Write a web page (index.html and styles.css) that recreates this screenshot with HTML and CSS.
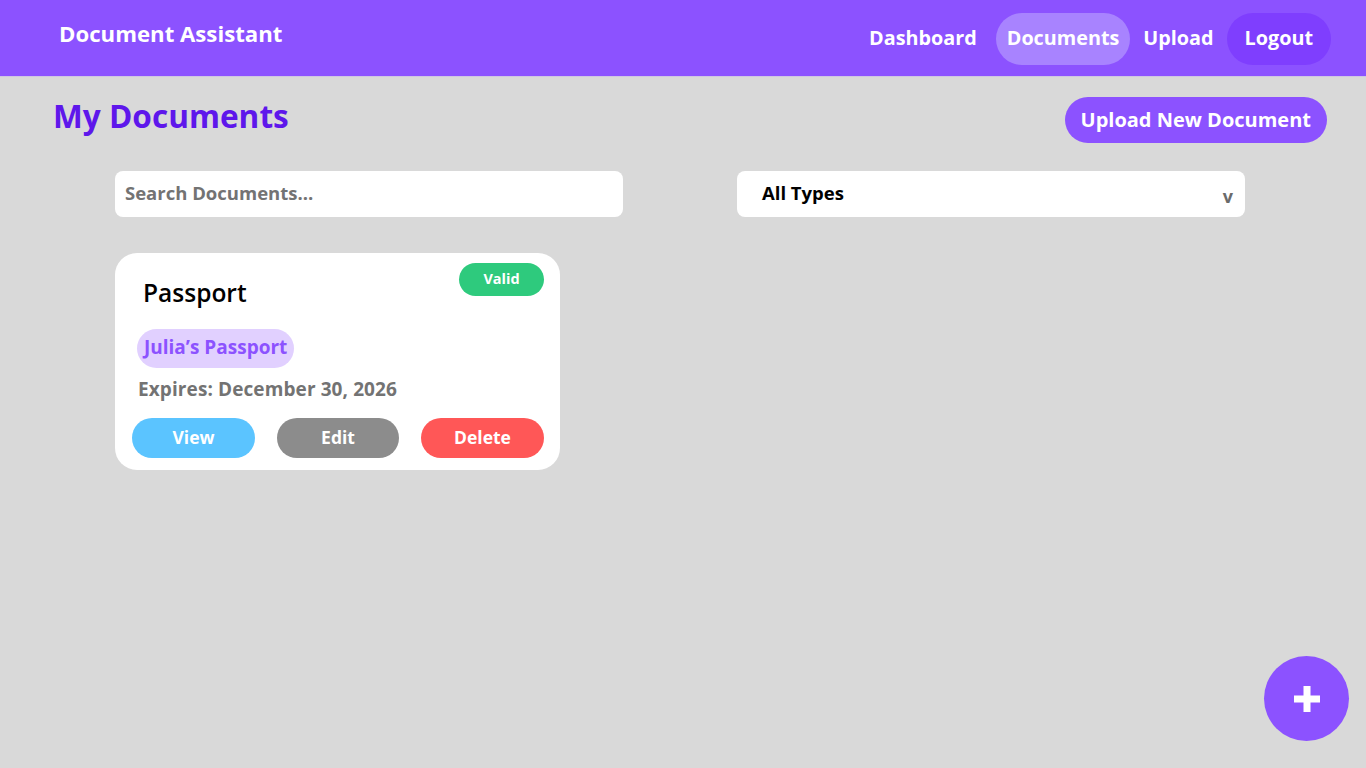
FILE: index.html
```html
<!DOCTYPE html>
<html lang="en">
<head>
<meta charset="utf-8">
<title>Document Assistant</title>
<link rel="stylesheet" href="styles.css">
</head>
<body>
<header class="topbar">
  <div class="brand">Document Assistant</div>
  <nav class="nav">
    <a class="nav-link">Dashboard</a>
    <a class="nav-link active">Documents</a>
    <a class="nav-link">Upload</a>
    <a class="nav-link logout">Logout</a>
  </nav>
</header>
<main class="main">
  <div class="page-head">
    <h1 class="page-title">My Documents</h1>
    <button class="upload-btn">Upload New Document</button>
  </div>
  <div class="filters">
    <div class="search">Search Documents...</div>
    <div class="select"><span>All Types</span><span class="caret">v</span></div>
  </div>
  <div class="cards">
    <article class="card">
      <div class="card-top">
        <h2 class="card-title">Passport</h2>
        <span class="badge">Valid</span>
      </div>
      <span class="chip">Julia’s Passport</span>
      <p class="expires">Expires: December 30, 2026</p>
      <div class="actions">
        <button class="btn view">View</button>
        <button class="btn edit">Edit</button>
        <button class="btn delete">Delete</button>
      </div>
    </article>
  </div>
</main>
<button class="fab" aria-label="Add">
  <svg width="26" height="26" viewBox="0 0 26 26"><rect x="9.5" y="0" width="7" height="26" fill="#fff"/><rect x="0" y="9.5" width="26" height="7" fill="#fff"/></svg>
</button>
</body>
</html>
```
FILE: styles.css
```css
* { box-sizing: border-box; }
html, body { margin: 0; padding: 0; }
body {
  background: #d9d9d9;
  font-family: "Open Sans", "Noto Sans", sans-serif;
  width: 1366px;
  height: 768px;
  overflow: hidden;
  position: relative;
}
.topbar {
  height: 77px;
  background: #8c52ff;
  border-bottom: 1px solid #cfc6e3;
  display: flex;
  align-items: flex-start;
  justify-content: space-between;
  padding: 0 35px 0 59px;
}
.brand {
  color: #fff;
  font-weight: 700;
  font-size: 22.2px;
  line-height: 26px;
  margin-top: 21px;
  letter-spacing: 0;
}
.nav {
  display: flex;
  align-items: center;
  margin-top: 13px;
}
.nav-link {
  color: #fff;
  font-weight: 700;
  font-size: 19.8px;
  height: 52px;
  line-height: 50px;
  padding: 0 11px;
  border-radius: 26px;
  letter-spacing: 0;
}
.nav-link:first-child { margin-right: 8px; }
.nav-link.active { background: #a883ff; margin-right: 2px; }
.nav-link.logout { background: #7f3efe; padding: 0 18px; margin-left: 2px; }
.main { padding: 0 39px 0 53px; }
.page-head {
  display: flex;
  justify-content: space-between;
  align-items: flex-start;
  padding-top: 20px;
}
.page-title {
  margin: 0;
  color: #5e17eb;
  font-size: 31.6px;
  font-weight: 700;
  line-height: 38px;
  letter-spacing: 0;
}
.upload-btn {
  background: #8c52ff;
  color: #fff;
  border: none;
  font-family: inherit;
  font-weight: 700;
  font-size: 20px;
  height: 46px;
  padding: 0 16px 2px 16px;
  border-radius: 23px;
  letter-spacing: 0;
}
.filters {
  display: flex;
  gap: 114px;
  margin: 28px 0 0 62px;
}
.search, .select {
  width: 508px;
  height: 46px;
  background: #fff;
  border-radius: 8px;
  display: flex;
  align-items: center;
  font-weight: 700;
  font-size: 18.5px;
  padding-bottom: 3px;
}
.search { color: #737373; padding-left: 10px; letter-spacing: 0; }
.select { color: #000; padding-left: 25px; padding-right: 12px; justify-content: space-between; }
.caret { color: #6b6b6b; font-size: 18px; margin-top: 6px; }
.cards { margin: 36px 0 0 62px; }
.card {
  width: 445px;
  height: 217px;
  background: #fff;
  border-radius: 22px;
  padding: 10px 16px 0 17px;
}
.card-top {
  display: flex;
  justify-content: space-between;
  align-items: flex-start;
}
.card-title {
  margin: 12px 0 0 11px;
  font-size: 24.5px;
  font-weight: 600;
  line-height: 36px;
  color: #000;
}
.badge {
  background: #2eca7d;
  color: #fff;
  font-size: 14.5px;
  font-weight: 700;
  height: 33px;
  width: 85px;
  line-height: 32px;
  text-align: center;
  border-radius: 17px;
}
.chip {
  display: inline-block;
  margin: 18px 0 0 5px;
  background: #e1d0ff;
  color: #8c52ff;
  font-weight: 700;
  font-size: 19px;
  height: 39px;
  line-height: 37px;
  padding: 0 7px;
  border-radius: 20px;
  letter-spacing: 0;
}
.expires {
  margin: 7px 0 0 6px;
  color: #737373;
  font-weight: 700;
  font-size: 19px;
  line-height: 28px;
  letter-spacing: 0.1px;
}
.actions {
  display: flex;
  justify-content: space-between;
  margin-top: 15px;
  width: 412px;
}
.btn {
  width: 123px;
  height: 40px;
  border: none;
  border-radius: 20px;
  color: #fff;
  font-family: inherit;
  font-weight: 700;
  font-size: 17.5px;
  padding: 0 0 2px;
}
.btn.view { background: #5bc4ff; }
.btn.edit { background: #8c8c8c; width: 122px; }
.btn.delete { background: #ff5757; }
.fab {
  position: absolute;
  left: 1264px;
  top: 656px;
  width: 85px;
  height: 85px;
  border-radius: 50%;
  background: #8c52ff;
  border: none;
  display: flex;
  align-items: center;
  justify-content: center;
  padding: 0;
}
```
